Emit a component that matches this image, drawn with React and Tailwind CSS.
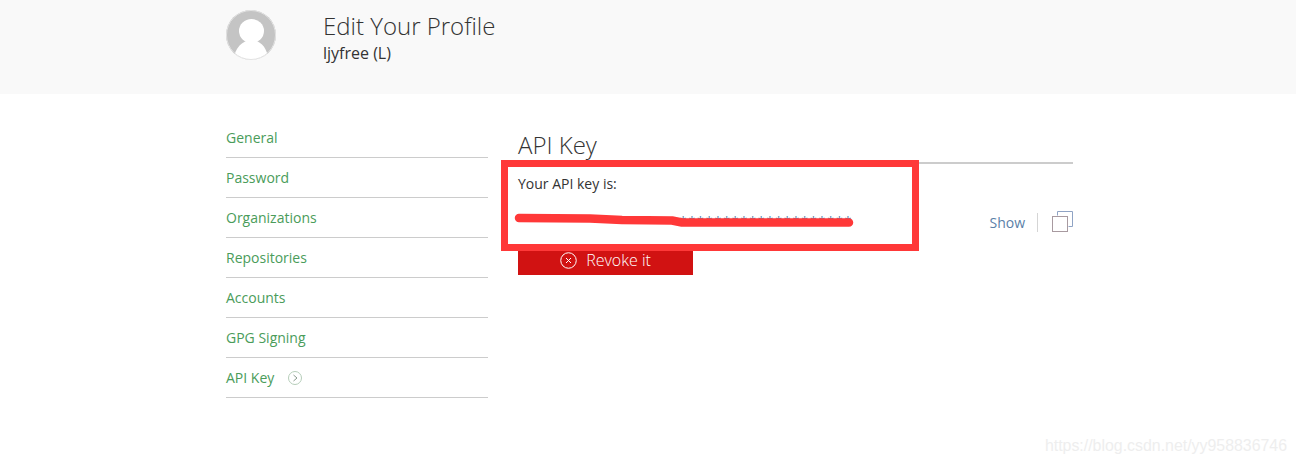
import React from "react";

const navItems = ["General", "Password", "Organizations", "Repositories", "Accounts", "GPG Signing", "API Key"];

const Avatar = () => (
	<svg width="50" height="50" viewBox="0 0 50 50" className="shrink-0">
		<defs>
			<clipPath id="avatar-clip">
				<circle cx="25" cy="25" r="25" />
			</clipPath>
		</defs>
		<circle cx="25" cy="25" r="25" fill="#c4c4c4" />
		<g clipPath="url(#avatar-clip)">
			<ellipse cx="25.5" cy="21" rx="12.5" ry="12" fill="#fff" />
			<path d="M8 50 C8 38 17 30 25.5 30 C34 30 42 38 42 50 Z" fill="#fff" />
		</g>
		<circle cx="25" cy="25" r="24.5" fill="none" stroke="#e2e2e2" />
	</svg>
);

const App = () => {
	return (
		<div className="relative w-[1296px] h-[464px] overflow-hidden bg-white text-[#333] font-['Open_Sans',sans-serif]">
			<header className="h-[94px] bg-[#f9f9f9] pl-[226px] pt-[10px] flex">
				<Avatar />
				<div className="ml-[47px] mt-[1px]">
					<h1 className="text-[24px] leading-[30px] font-light text-[#333]">Edit Your Profile</h1>
					<p className="text-[16px] leading-[20px] mt-[2px] text-[#333]">ljyfree (L)</p>
				</div>
			</header>

			<div className="pl-[226px] flex">
				<nav className="w-[262px] pt-[24px]">
					{navItems.map((item) => (
						<div key={item} className="h-[40px] border-b border-[#ccc] flex items-center text-[14px] text-[#4a9c5a]">
							<span className="-mt-[1px]">{item}</span>
							{item === "API Key" && (
								<svg width="14" height="14" viewBox="0 0 14 14" fill="none" className="ml-[14px]">
									<circle cx="7" cy="7" r="6.5" stroke="#b5cdb9" />
									<path d="M5.5 4 L9 7 L5.5 10" stroke="#8a9a8d" />
								</svg>
							)}
						</div>
					))}
				</nav>

				<main className="ml-[30px] w-[555px] pt-[34px]">
					<h2 className="h-[36px] text-[24px] leading-[34px] font-light text-[#333] border-b-2 border-[#ccc]">API Key</h2>
					<p className="mt-[10px] text-[14px] leading-[20px] text-[#333]">Your API key is:</p>
					<div className="mt-[15px] h-[26px] flex items-center">
						<span className="ml-[162px] mt-[2px] w-[173px] text-[16px] leading-[12px] tracking-[2.45px] text-[#5b7fa8] font-['Liberation_Sans',sans-serif]">********************</span>
						<span className="ml-auto text-[14px] text-[#5b7fa8] mt-[1px]">Show</span>
						<span className="ml-[12px] w-px h-[19px] bg-[#d5d5d5]"></span>
						<svg width="21" height="21" viewBox="0 0 21 21" fill="none" className="ml-[14px] -mt-[1px]">
							<path d="M5.5 4.5 V0.5 H20.5 V15.5 H16.5" stroke="#8fa3c4" />
							<rect x="0.5" y="5.5" width="15" height="15" stroke="#a89aa0" />
						</svg>
					</div>
					<button className="mt-[13px] w-[175px] h-[27px] bg-[#d11212] flex items-center justify-center text-[16px] font-light text-white">
						<svg width="17" height="17" viewBox="0 0 17 17" fill="none" className="mr-[9px] -mt-[2px]">
							<circle cx="8.5" cy="8.5" r="7.75" stroke="#fff" />
							<path d="M6 6 L11 11 M11 6 L6 11" stroke="#fff" />
						</svg>
						<span className="-mt-[4px]">Revoke it</span>
					</button>
				</main>
			</div>

			{/* hand drawn annotation on top of the page */}
			<div className="absolute left-[501px] top-[160px] w-[418px] h-[91px] border-[7px] border-[#ff3838]"></div>
			<svg width="350" height="24" viewBox="0 0 350 24" fill="none" className="absolute left-[510px] top-[208px]">
				<path
					d="M9 10 L80 10.5 L112 12 L162 12.5 L172 14.5 L339 14.5"
					stroke="#ff3838"
					strokeWidth="8.5"
					strokeLinecap="round"
					strokeLinejoin="round"
				/>
			</svg>
			<span className="absolute right-[9px] top-[436px] text-[15.9px] leading-[20px] text-[#eeeeee] font-['Liberation_Sans',sans-serif]">https://blog.csdn.net/yy958836746</span>
		</div>
	);
};

export default App;
